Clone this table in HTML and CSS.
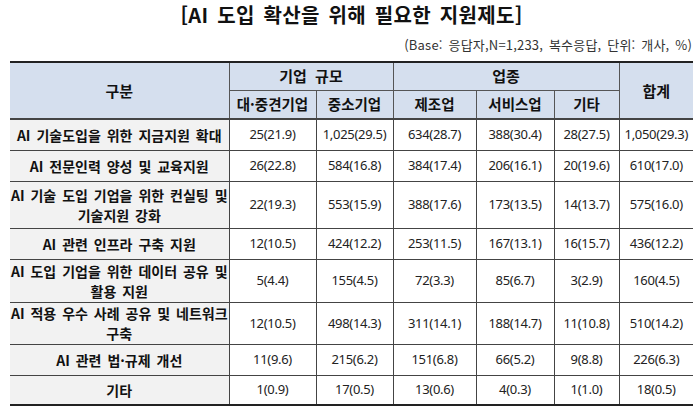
FILE: index.html
```html
<!DOCTYPE html>
<html lang="ko">
<head>
<meta charset="utf-8">
<link rel="stylesheet" href="styles.css">
</head>
<body>
<div class="page">
  <h1 class="title">[AI 도입 확산을 위해 필요한 지원제도]</h1>
  <p class="note">(Base: 응답자,N=1,233, 복수응답, 단위: 개사, %)</p>
  <table class="tbl">
    <colgroup>
      <col class="c0"><col class="c1"><col class="c2"><col class="c3"><col class="c4"><col class="c5"><col class="c6">
    </colgroup>
    <thead>
      <tr class="h1">
        <th rowspan="2">구분</th>
        <th colspan="2">기업 규모</th>
        <th colspan="3">업종</th>
        <th rowspan="2" class="last">합계</th>
      </tr>
      <tr class="h2">
        <th>대·중견기업</th>
        <th>중소기업</th>
        <th>제조업</th>
        <th>서비스업</th>
        <th>기타</th>
      </tr>
    </thead>
    <tbody>
      <tr class="r31"><td class="lab">AI 기술도입을 위한 지금지원 확대</td><td>25(21.9)</td><td>1,025(29.5)</td><td>634(28.7)</td><td>388(30.4)</td><td>28(27.5)</td><td class="last">1,050(29.3)</td></tr>
      <tr class="r31"><td class="lab">AI 전문인력 양성 및 교육지원</td><td>26(22.8)</td><td>584(16.8)</td><td>384(17.4)</td><td>206(16.1)</td><td>20(19.6)</td><td class="last">610(17.0)</td></tr>
      <tr class="r47"><td class="lab">AI 기술 도입 기업을 위한 컨실팅 및<br>기술지원 강화</td><td>22(19.3)</td><td>553(15.9)</td><td>388(17.6)</td><td>173(13.5)</td><td>14(13.7)</td><td class="last">575(16.0)</td></tr>
      <tr class="r31"><td class="lab">AI 관련 인프라 구축 지원</td><td>12(10.5)</td><td>424(12.2)</td><td>253(11.5)</td><td>167(13.1)</td><td>16(15.7)</td><td class="last">436(12.2)</td></tr>
      <tr class="r43"><td class="lab">AI 도입 기업을 위한 데이터 공유 및<br>활용 지원</td><td>5(4.4)</td><td>155(4.5)</td><td>72(3.3)</td><td>85(6.7)</td><td>3(2.9)</td><td class="last">160(4.5)</td></tr>
      <tr class="r42"><td class="lab">AI 적용 우수 사례 공유 및 네트워크<br>구축</td><td>12(10.5)</td><td>498(14.3)</td><td>311(14.1)</td><td>188(14.7)</td><td>11(10.8)</td><td class="last">510(14.2)</td></tr>
      <tr class="r31"><td class="lab">AI 관련 법·규제 개선</td><td>11(9.6)</td><td>215(6.2)</td><td>151(6.8)</td><td>66(5.2)</td><td>9(8.8)</td><td class="last">226(6.3)</td></tr>
      <tr class="r30"><td class="lab">기타</td><td>1(0.9)</td><td>17(0.5)</td><td>13(0.6)</td><td>4(0.3)</td><td>1(1.0)</td><td class="last">18(0.5)</td></tr>
    </tbody>
  </table>
</div>
</body>
</html>
```
FILE: styles.css
```css
html, body {
  margin: 0;
  padding: 0;
  background: #ffffff;
}
.page {
  width: 700px;
  height: 414px;
  padding: 0 7px 0 10px;
  box-sizing: border-box;
  font-family: "Noto Sans CJK KR", "Noto Sans", sans-serif;
  color: #111;
}
.title {
  margin: 0;
  padding-top: 2px;
  height: 27px;
  font-size: 20px;
  line-height: 26px;
  font-weight: 700;
  text-align: center;
  letter-spacing: 0.3px;
  word-spacing: 3px;
}
.note {
  margin: 0;
  height: 32px;
  font-size: 13px;
  line-height: 32px;
  text-align: right;
  color: #333;
  padding-right: 1px;
  word-spacing: 2px;
  letter-spacing: 0.2px;
}
.tbl {
  width: 683px;
  border-collapse: collapse;
  table-layout: fixed;
  border-top: 2px solid #222;
  border-bottom: 2px solid #222;
}
.c0 { width: 219px; }
.c1 { width: 87px; }
.c2 { width: 77px; }
.c3 { width: 83px; }
.c4 { width: 78px; }
.c5 { width: 65px; }
.c6 { width: 74px; }
.tbl th {
  background: #d5dfee;
  font-weight: 700;
  font-size: 15px;
  line-height: 18px;
  padding: 0;
  border: 1px solid #555;
  word-spacing: 4px;
}
.tbl th:first-child { border-left: none; }
.tbl .last { border-right: none; }
.h1 { height: 28px; }
.h2 { height: 29px; }
.h2 th { font-size: 14.5px; word-spacing: 0; }
thead tr.h2 th { border-bottom: 2px solid #444; }
thead tr.h1 th[rowspan] { border-bottom: 2px solid #444; }
.tbl td {
  border: 1px solid #444;
  text-align: center;
  font-size: 13px;
  line-height: 19px;
  padding: 0;
  font-family: "Noto Sans", "Noto Sans CJK KR", sans-serif;
  letter-spacing: -0.3px;
  color: #222;
}
.tbl td.lab {
  background: #f2f2f2;
  border-left: none;
  font-family: "Noto Sans CJK KR", sans-serif;
  font-weight: 700;
  font-size: 14px;
  line-height: 20px;
  letter-spacing: 0;
  word-spacing: 2px;
  color: #111;
}
.r31 { height: 31px; }
.r30 { height: 30px; }
.r47 { height: 47px; }
.r43 { height: 43px; }
.r42 { height: 42px; }
```
